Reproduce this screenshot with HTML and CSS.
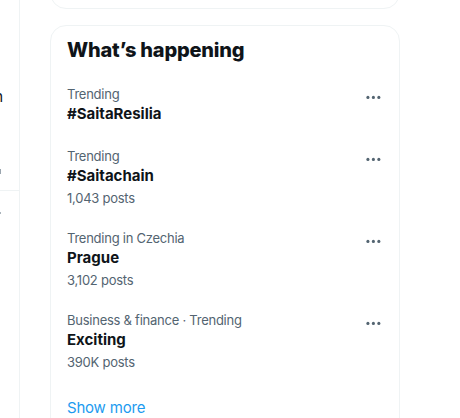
FILE: index.html
```html
<!DOCTYPE html>
<html lang="en">
<head>
<meta charset="utf-8">
<title>What’s happening</title>
<link rel="stylesheet" href="styles.css">
</head>
<body>
<div class="layout">
  <main class="timeline">
    <article class="tweet">
      <div class="tweet-text"><span>Show this thread on</span></div>
      <div class="tweet-actions"><span class="action-mark"></span></div>
    </article>
    <article class="tweet tweet-next">
      <div class="tweet-actions"><span class="action-mark small"></span></div>
    </article>
  </main>
  <aside class="sidebar">
    <section class="card card-prev"></section>
    <section class="card">
      <h2 class="card-title">What’s happening</h2>
      <div class="trend">
        <div class="trend-body">
          <div class="trend-meta">Trending</div>
          <div class="trend-name">#SaitaResilia</div>
        </div>
        <svg class="more" viewBox="0 0 24 24" aria-hidden="true"><circle cx="5" cy="12" r="2"/><circle cx="12" cy="12" r="2"/><circle cx="19" cy="12" r="2"/></svg>
      </div>
      <div class="trend">
        <div class="trend-body">
          <div class="trend-meta">Trending</div>
          <div class="trend-name">#Saitachain</div>
          <div class="trend-count">1,043 posts</div>
        </div>
        <svg class="more" viewBox="0 0 24 24" aria-hidden="true"><circle cx="5" cy="12" r="2"/><circle cx="12" cy="12" r="2"/><circle cx="19" cy="12" r="2"/></svg>
      </div>
      <div class="trend">
        <div class="trend-body">
          <div class="trend-meta">Trending in Czechia</div>
          <div class="trend-name">Prague</div>
          <div class="trend-count">3,102 posts</div>
        </div>
        <svg class="more" viewBox="0 0 24 24" aria-hidden="true"><circle cx="5" cy="12" r="2"/><circle cx="12" cy="12" r="2"/><circle cx="19" cy="12" r="2"/></svg>
      </div>
      <div class="trend">
        <div class="trend-body">
          <div class="trend-meta">Business &amp; finance · Trending</div>
          <div class="trend-name">Exciting</div>
          <div class="trend-count">390K posts</div>
        </div>
        <svg class="more" viewBox="0 0 24 24" aria-hidden="true"><circle cx="5" cy="12" r="2"/><circle cx="12" cy="12" r="2"/><circle cx="19" cy="12" r="2"/></svg>
      </div>
      <a class="show-more" href="#">Show more</a>
    </section>
  </aside>
</div>
</body>
</html>
```
FILE: styles.css
```css
* { box-sizing: border-box; }
html, body {
  margin: 0;
  background: #ffffff;
  overflow: hidden;
}
body {
  font-family: Inter, "Liberation Sans", sans-serif;
  color: #0f1419;
  width: 460px;
  height: 418px;
}
.layout {
  display: flex;
  align-items: flex-start;
}

/* timeline fragment on the left */
.timeline {
  width: 20px;
  flex: none;
  border-right: 1px solid #eff3f4;
  height: 418px;
  overflow: hidden;
}
.tweet {
  height: 191px;
  border-bottom: 1px solid #eff3f4;
  padding-top: 87px;
}
.tweet-text {
  display: flex;
  justify-content: flex-end;
  padding-right: 16px;
  white-space: nowrap;
  font-size: 15px;
  line-height: 20px;
  color: #0f1419;
}
.tweet-actions {
  display: flex;
  justify-content: flex-end;
  padding-right: 18px;
  margin-top: 62px;
}
.action-mark {
  display: block;
  width: 1px;
  height: 5px;
  background: #9aa5ae;
}
.tweet-next {
  height: 300px;
  padding-top: 0;
  border-bottom: none;
}
.tweet-next .tweet-actions { margin-top: 21px; }
.action-mark.small { height: 2px; background: #aab4bb; }

/* sidebar */
.sidebar {
  width: 380px;
  flex: none;
  padding-left: 30px;
}
.card {
  width: 350px;
  border: 1px solid #eff3f4;
  border-radius: 16px;
  margin-bottom: 16px;
}
.card-prev {
  height: 41px;
  margin-top: -32px;
}
.card-title {
  margin: 0;
  padding: 12px 16px;
  font-size: 20px;
  line-height: 24px;
  font-weight: 800;
  letter-spacing: -0.2px;
  color: #0f1419;
}
.trend {
  display: flex;
  justify-content: space-between;
  align-items: flex-start;
  padding: 12px 16px;
}
.trend-body {
  display: flex;
  flex-direction: column;
}
.trend-meta,
.trend-count {
  font-size: 13px;
  line-height: 16px;
  color: #536471;
  letter-spacing: -0.25px;
}
.trend-name {
  padding-top: 2px;
  font-size: 15px;
  line-height: 20px;
  font-weight: 700;
  color: #0f1419;
}
.trend-count { margin-top: 4px; }
.more {
  width: 18.75px;
  height: 18.75px;
  margin-top: 2px;
  fill: #536471;
  flex: none;
}
.show-more {
  display: block;
  padding: 16px;
  font-size: 15px;
  line-height: 20px;
  color: #1d9bf0;
  text-decoration: none;
  letter-spacing: -0.2px;
}
```
